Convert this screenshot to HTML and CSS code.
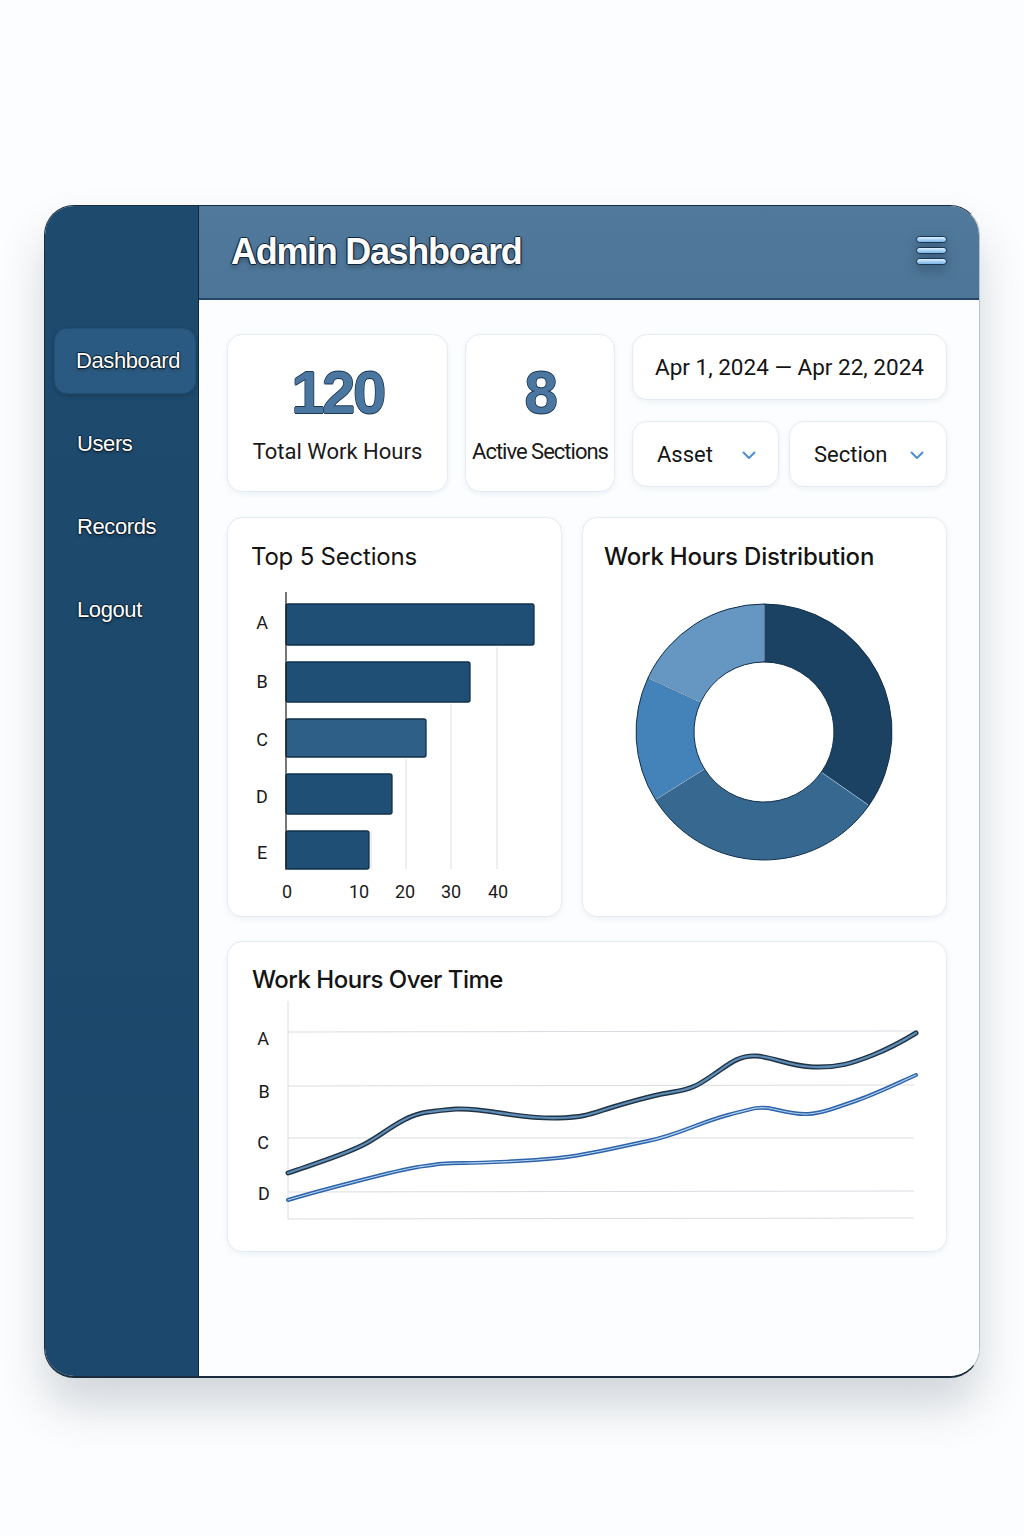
FILE: index.html
```html
<!DOCTYPE html>
<html lang="en">
<head>
<meta charset="utf-8">
<title>Admin Dashboard</title>
<link rel="stylesheet" href="styles.css">
</head>
<body>
<div class="frame">
  <aside class="sidebar">
    <nav class="nav">
      <a class="nav-item active">Dashboard</a>
      <a class="nav-item">Users</a>
      <a class="nav-item">Records</a>
      <a class="nav-item">Logout</a>
    </nav>
  </aside>
  <div class="main">
    <header class="topbar">
      <h1 class="title">Admin Dashboard</h1>
      <div class="menu"><span></span><span></span><span></span></div>
    </header>
    <div class="content">
      <div class="row-top">
        <div class="card stat">
          <div class="stat-num">120</div>
          <div class="stat-label">Total Work Hours</div>
        </div>
        <div class="card stat">
          <div class="stat-num">8</div>
          <div class="stat-label stat-label-tight">Active Sections</div>
        </div>
        <div class="filters">
          <div class="card date">Apr 1, 2024 — Apr 22, 2024</div>
          <div class="dd-row">
            <div class="card dd dd-asset"><span>Asset</span><svg class="chev" width="14" height="9" viewBox="0 0 14 9"><path d="M1.5 1.5 L7 7 L12.5 1.5" fill="none" stroke="#4a8fd6" stroke-width="2" stroke-linecap="round" stroke-linejoin="round"/></svg></div>
            <div class="card dd dd-section"><span>Section</span><svg class="chev" width="14" height="9" viewBox="0 0 14 9"><path d="M1.5 1.5 L7 7 L12.5 1.5" fill="none" stroke="#4a8fd6" stroke-width="2" stroke-linecap="round" stroke-linejoin="round"/></svg></div>
          </div>
        </div>
      </div>

      <div class="row-charts">
        <div class="card chart">
          <h2 class="chart-title">Top 5 Sections</h2>
          <svg class="chart-svg" width="335" height="344" viewBox="0 0 335 344">
            <g stroke="#dadfe4" stroke-width="1">
              <line x1="143" y1="259" x2="143" y2="297"/>
              <line x1="178" y1="187" x2="178" y2="297"/>
              <line x1="223" y1="132" x2="223" y2="297"/>
              <line x1="269" y1="75" x2="269" y2="297"/>
            </g>
            <g stroke="#10304b" stroke-width="1.3">
              <rect x="58" y="32" width="248" height="41" rx="2" fill="#1f4f74"/>
              <rect x="58" y="90" width="184" height="40" rx="2" fill="#1f4f74"/>
              <rect x="58" y="147" width="140" height="38" rx="2" fill="#2d5f87"/>
              <rect x="58" y="202" width="106" height="40" rx="2" fill="#1f4f74"/>
              <rect x="58" y="259" width="83" height="38" rx="2" fill="#1f4f74"/>
            </g>
            <line x1="58" y1="20" x2="58" y2="298" stroke="#1c1c1c" stroke-width="1.2"/>
            <g class="axis-text" text-anchor="middle">
              <text x="34" y="57">A</text>
              <text x="34" y="116">B</text>
              <text x="34" y="174">C</text>
              <text x="34" y="231">D</text>
              <text x="34" y="287">E</text>
              <text x="59" y="326">0</text>
              <text x="131" y="326">10</text>
              <text x="177" y="326">20</text>
              <text x="223" y="326">30</text>
              <text x="270" y="326">40</text>
            </g>
          </svg>
        </div>
        <div class="card chart">
          <h2 class="chart-title chart-title-strong">Work Hours Distribution</h2>
          <svg class="chart-svg" width="364" height="344" viewBox="0 0 364 344">
            <g stroke="#12304c" stroke-width="1" stroke-linejoin="round">
              <path d="M181,32 A128,128 0 0 1 285.9,233.4 L238.3,200.2 A70,70 0 0 0 181,90 Z" fill="#1b4262"/>
              <path d="M285.9,233.4 A128,128 0 0 1 72.5,227.8 L121.6,197.1 A70,70 0 0 0 238.3,200.2 Z" fill="#37688f"/>
              <path d="M72.5,227.8 A128,128 0 0 1 65,105.9 L117.6,130.4 A70,70 0 0 0 121.6,197.1 Z" fill="#4383b9"/>
              <path d="M65,105.9 A128,128 0 0 1 181,32 L181,90 A70,70 0 0 0 117.6,130.4 Z" fill="#6597c2"/>
            </g>
            <g stroke="#9cc2e4" stroke-width="1">
              <line x1="181" y1="33" x2="181" y2="89"/>
              <line x1="285" y1="232.8" x2="239" y2="200.7"/>
              <line x1="73.3" y1="227.3" x2="121" y2="197.4"/>
              <line x1="66" y1="106.4" x2="117" y2="130.1"/>
            </g>
          </svg>
        </div>
      </div>

      <div class="card chart line-card">
        <h2 class="chart-title chart-title-strong chart-title-line">Work Hours Over Time</h2>
        <svg class="chart-svg" width="719" height="256" viewBox="0 0 719 256">
          <g stroke="#d8dce1" stroke-width="1">
            <line x1="60" y1="37" x2="686" y2="36"/>
            <line x1="60" y1="91" x2="686" y2="90"/>
            <line x1="60" y1="143" x2="686" y2="143"/>
            <line x1="60" y1="197" x2="686" y2="196"/>
            <line x1="60" y1="224" x2="686" y2="223"/>
            <line x1="60" y1="6" x2="60" y2="224"/>
          </g>
          <g class="axis-text" text-anchor="middle">
            <text x="35" y="50">A</text>
            <text x="36" y="103">B</text>
            <text x="35" y="154">C</text>
            <text x="36" y="205">D</text>
          </g>
          <g fill="none" stroke-linecap="round" stroke-linejoin="round">
            <path d="M60,178 C95,166 115,160 135,150 S175,120 200,117 S230,113 250,115 S300,124 330,123 S365,118 385,112 S425,100 445,97 S470,90 485,80 S510,60 528,61 S560,71 585,72 S625,68 645,60 S675,46 688,38" stroke="#1f3346" stroke-width="5"/>
            <path d="M60,178 C95,166 115,160 135,150 S175,120 200,117 S230,113 250,115 S300,124 330,123 S365,118 385,112 S425,100 445,97 S470,90 485,80 S510,60 528,61 S560,71 585,72 S625,68 645,60 S675,46 688,38" stroke="#5f8db5" stroke-width="2.2"/>
            <path d="M60,205 C90,196 170,175 190,172 S215,168 235,168 S300,166 330,163 S390,152 420,146 S470,128 500,120 S532,112 540,113 S565,120 580,119 S610,112 630,105 S670,88 688,80" stroke="#2c63ab" stroke-width="4"/>
            <path d="M60,205 C90,196 170,175 190,172 S215,168 235,168 S300,166 330,163 S390,152 420,146 S470,128 500,120 S532,112 540,113 S565,120 580,119 S610,112 630,105 S670,88 688,80" stroke="#b7d3ef" stroke-width="1.2"/>
          </g>
        </svg>
      </div>
    </div>
  </div>
</div>
</body>
</html>
```
FILE: styles.css
```css
* { box-sizing: border-box; }

html, body {
  margin: 0;
  padding: 0;
  background: #fcfdfe;
}

body {
  min-height: 1536px;
  padding-top: 205px;
  padding-bottom: 120px;
  font-family: Roboto, "Liberation Sans", sans-serif;
  color: #111;
}

.frame {
  width: 936px;
  height: 1173px;
  margin: 0 auto;
  display: grid;
  grid-template-columns: 154px 1fr;
  border-radius: 30px;
  overflow: hidden;
  border: 1px solid #1a2c3d;
  border-right-color: #b9c2cb;
  border-bottom-width: 2px;
  box-shadow: 0 28px 46px rgba(40, 60, 80, 0.2);
  background: #fcfdfe;
}

/* Sidebar */
.sidebar {
  background: linear-gradient(180deg, #1e4a6d 0%, #1b486c 100%);
  border-right: 1px solid #0f2539;
  padding-top: 122px;
}

.nav {
  display: flex;
  flex-direction: column;
  gap: 17px;
  padding-left: 9px;
  padding-right: 2px;
}

.nav-item {
  display: flex;
  align-items: center;
  height: 66px;
  padding-left: 23px;
  font-family: "Liberation Sans", Arial, sans-serif;
  font-size: 22px;
  letter-spacing: -0.4px;
  color: #fff;
  text-shadow: -1px 0 #0c1f30, 1px 0 #0c1f30, 0 -1px #0c1f30, 0 1px #0c1f30, 0 2px 3px rgba(0,0,0,0.35);
}

.nav-item.active {
  padding-left: 21px;
  background: #2a5a81;
  border-radius: 13px;
  border: 1px solid #244f74;
  box-shadow: 0 2px 4px rgba(0,0,0,0.18);
}

/* Main */
.main {
  display: flex;
  flex-direction: column;
  min-width: 0;
}

.topbar {
  height: 94px;
  flex: none;
  display: flex;
  align-items: center;
  justify-content: space-between;
  padding: 0 32px 0 32px;
  background: linear-gradient(180deg, #51799b 0%, #4d7597 100%);
  border-bottom: 2px solid #25486a;
}

.title {
  margin: 0;
  font-family: "Liberation Sans", Arial, sans-serif;
  font-weight: 700;
  font-size: 36px;
  letter-spacing: -1.3px;
  color: #fff;
  text-shadow: -1.2px 0 #14263a, 1.2px 0 #14263a, 0 -1.2px #14263a, 0 1.2px #14263a, 0 3px 5px rgba(0,0,0,0.3);
}

.menu {
  display: flex;
  flex-direction: column;
  gap: 4px;
  filter: drop-shadow(0 5px 6px rgba(10, 30, 50, 0.35));
  margin-bottom: 4px;
}

.menu span {
  display: block;
  width: 31px;
  height: 7px;
  border-radius: 4px;
  border: 1.3px solid #1b3550;
  background: linear-gradient(180deg, #e3f1fd 0%, #9ccbf2 60%, #7fb4e6 100%);
}

.content {
  flex: 1;
  padding: 34px 32px 0 28px;
  background: #fbfdfe;
}

.card {
  background: #fff;
  border: 1px solid #e4ebf2;
  border-radius: 15px;
  box-shadow: 0 2px 5px rgba(120, 150, 180, 0.10);
}

.row-top {
  display: grid;
  grid-template-columns: 221px 150px 1fr;
  column-gap: 17px;
  height: 158px;
}

.stat {
  display: flex;
  flex-direction: column;
  align-items: center;
  padding-top: 26px;
}

.stat-num {
  font-family: "Liberation Sans", Arial, sans-serif;
  font-weight: 700;
  font-size: 60px;
  line-height: 64px;
  letter-spacing: -2.5px;
  color: #4a76a0;
  text-shadow: -0.8px 0 #1b3650, 0.8px 0 #1b3650, 0 -0.8px #1b3650, 0 0.8px #1b3650;
}

.stat-label {
  margin-top: 14px;
  font-size: 22px;
  line-height: 26px;
  color: #1a1a1a;
  white-space: nowrap;
}

.stat-label-tight {
  letter-spacing: -1px;
}

.filters {
  display: flex;
  flex-direction: column;
  gap: 21px;
}

.date {
  height: 66px;
  display: flex;
  align-items: center;
  justify-content: center;
  font-size: 22.5px;
  color: #151515;
  white-space: nowrap;
}

.dd-row {
  display: flex;
  gap: 10px;
  height: 66px;
}

.dd {
  display: flex;
  align-items: center;
  justify-content: space-between;
  padding: 0 22px 0 24px;
  font-size: 22px;
  color: #151515;
}

.dd-asset { width: 147px; }
.dd-section { flex: 1; }

.chev { margin-top: 3px; }

.row-charts {
  display: grid;
  grid-template-columns: 335px 1fr;
  column-gap: 20px;
  margin-top: 25px;
  height: 400px;
}

.chart {
  display: flex;
  flex-direction: column;
  overflow: hidden;
}

.chart-title {
  margin: 0;
  padding: 24px 24px 0 23px;
  font-family: Inter, "Noto Sans", sans-serif;
  font-weight: 400;
  font-size: 24px;
  line-height: 30px;
  color: #141414;
  letter-spacing: -0.2px;
}

.chart-title-strong {
  font-weight: 500;
  padding-left: 21px;
}

.chart-title-line {
  padding-top: 23px;
  padding-left: 24px;
  letter-spacing: -0.5px;
}

.chart-svg {
  display: block;
  flex: none;
}

.axis-text {
  font-family: Roboto, "Liberation Sans", sans-serif;
  font-size: 18px;
  fill: #1a1a1a;
}

.line-card {
  margin-top: 24px;
  height: 311px;
}
```
